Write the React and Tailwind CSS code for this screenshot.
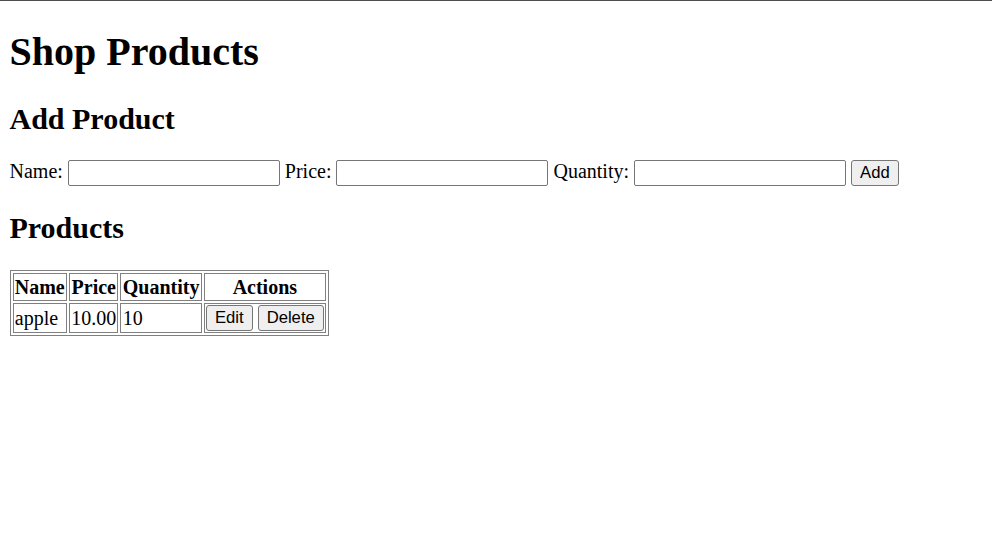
import React from 'react';

const products = [{ name: 'apple', price: '10.00', quantity: 10 }];

const inputCls =
  "w-[212px] h-[26px] align-baseline bg-white border border-[#767676] rounded-[2px] px-[2.5px] font-['Liberation_Sans',Arial,sans-serif] text-[16.67px]";
const btnCls =
  "h-[26px] align-baseline bg-[#efefef] border border-[#767676] rounded-[3px] px-[8px] font-['Liberation_Sans',Arial,sans-serif] text-[16.67px] text-black leading-[normal]";
const cellCls = 'border border-[#808080] p-[1.25px]';

export default function App() {
  return (
    <div className="min-h-screen bg-white border-t border-[#4d4d4d] px-[9.5px] text-black text-[20px] leading-[normal] font-['Liberation_Serif','Times_New_Roman',serif]">
      <h1 className="mt-[26.8px] mb-[26.8px] text-[40px] font-bold leading-[normal]">Shop Products</h1>

      <h2 className="mt-[24.9px] mb-[24.9px] text-[30px] font-bold leading-[normal]">Add Product</h2>
      <div>
        Name: <input type="text" className={inputCls} /> Price: <input type="text" className={inputCls} />{' '}
        Quantity: <input type="text" className={inputCls} /> <button className={btnCls}>Add</button>
      </div>

      <h2 className="mt-[24.9px] mb-[24.9px] text-[30px] font-bold leading-[normal]">Products</h2>
      <table className="border border-[#808080] border-separate border-spacing-[2.5px]">
        <thead>
          <tr>
            <th className={cellCls}>Name</th>
            <th className={cellCls}>Price</th>
            <th className={cellCls}>Quantity</th>
            <th className={cellCls}>Actions</th>
          </tr>
        </thead>
        <tbody>
          {products.map((p) => (
            <tr key={p.name}>
              <td className={cellCls}>{p.name}</td>
              <td className={cellCls}>{p.price}</td>
              <td className={cellCls}>{p.quantity}</td>
              <td className={cellCls}>
                <button className={btnCls + ' h-[25px]'}>Edit</button> <button className={btnCls + ' h-[25px]'}>Delete</button>
              </td>
            </tr>
          ))}
        </tbody>
      </table>
    </div>
  );
}
